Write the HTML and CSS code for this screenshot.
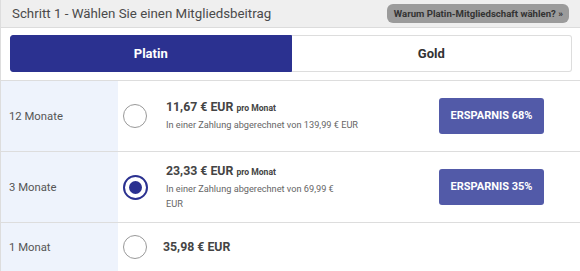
FILE: index.html
```html
<!DOCTYPE html>
<html>
  <head>
    <title>Mitgliedschaft</title>
    <meta name="viewport" content="width=device-width, initial-scale=1.0" />
    <link rel="stylesheet" href="styles.css">
  </head>
  <body>
    <div class="panel">
      <div class="panel-head">
        <span class="step">Schritt 1 - Wählen Sie einen Mitgliedsbeitrag</span>
        <a class="why" href="#">Warum Platin-Mitgliedschaft wählen? »</a>
      </div>

      <!-- Membership type -->
      <div class="tabs">
        <button class="tab active">Platin</button>
        <button class="tab">Gold</button>
      </div>

      <!-- Plans -->
      <div class="plans">
        <div class="plan">
          <div class="term">12 Monate</div>
          <div class="radio"></div>
          <div class="price">
            <div class="amount">11,67 € EUR <small>pro Monat</small></div>
            <div class="note">In einer Zahlung abgerechnet von 139,99 € EUR</div>
          </div>
          <div class="save"><span>ERSPARNIS 68%</span></div>
        </div>

        <div class="plan">
          <div class="term">3 Monate</div>
          <div class="radio checked"></div>
          <div class="price">
            <div class="amount">23,33 € EUR <small>pro Monat</small></div>
            <div class="note">In einer Zahlung abgerechnet von 69,99 €<br>EUR</div>
          </div>
          <div class="save"><span>ERSPARNIS 35%</span></div>
        </div>

        <div class="plan last">
          <div class="term">1 Monat</div>
          <div class="radio"></div>
          <div class="price">
            <div class="amount single">35,98 € EUR</div>
          </div>
          <div class="save"></div>
        </div>
      </div>
    </div>
  </body>
</html>
```

FILE: styles.css
```css
/* Base styles */
body {
  font-family: Roboto, "Liberation Sans", sans-serif;
  margin: 0;
  padding: 0;
  background: #fff;
  color: #444;
}

.panel {
  border-left: 1px solid #ddd;
}

.panel-head {
  height: 27px;
  background: #efefef;
  border-bottom: 1px solid #dcdcdc;
  display: flex;
  align-items: center;
  justify-content: space-between;
  padding: 0 11px 0 11px;
}

.step {
  font-size: 13.3px;
  color: #4a4a4a;
}

.why {
  background: #9b9b9b;
  color: #333;
  font-size: 9.6px;
  font-weight: bold;
  text-decoration: none;
  border-radius: 6px;
  padding: 4px 6px 4px 7px;
  margin-top: -1px;
}

/* Tabs */
.tabs {
  display: flex;
  margin: 7px 8px 8px 9px;
}

.tab {
  flex: 1;
  height: 37px;
  font-family: inherit;
  font-size: 13px;
  font-weight: bold;
  border: 1px solid #ddd;
  background: #fff;
  color: #333;
  cursor: pointer;
}

.tab.active {
  background: #2b3190;
  border-color: #2b3190;
  color: #fff;
  border-radius: 3px 0 0 3px;
}

.tab:last-child {
  border-left: none;
  border-radius: 0 3px 3px 0;
}

/* Plans */
.plans {
  border-top: 1px solid #ddd;
}

.plan {
  display: grid;
  grid-template-columns: 117px 43px 273px 1fr;
  align-items: center;
  height: 70px;
  border-bottom: 1px solid #ddd;
}

.plan.last {
  height: 48px;
  border-bottom: none;
}

.term {
  background: #eef3fc;
  height: 100%;
  display: flex;
  align-items: center;
  padding-left: 8px;
  font-size: 11.3px;
  color: #555;
}

.radio {
  width: 22px;
  height: 22px;
  border: 1.5px solid #999;
  border-radius: 50%;
  margin-left: 5px;
  position: relative;
}

.radio.checked {
  border: 2px solid #2b3190;
  width: 21px;
  height: 21px;
}

.radio.checked::after {
  content: "";
  position: absolute;
  left: 4px;
  top: 4px;
  width: 13px;
  height: 13px;
  border-radius: 50%;
  background: #2b3190;
}

.price {
  padding-left: 5px;
}

.amount {
  font-size: 12.3px;
  font-weight: bold;
  color: #444;
  line-height: 15px;
}

.amount small {
  font-size: 8.6px;
}

.amount.single {
  margin-left: -3px;
}

.note {
  font-size: 9.2px;
  color: #666;
  margin-top: 1px;
  line-height: 15px;
}

.save span {
  display: inline-block;
  width: 105px;
  height: 36px;
  line-height: 36px;
  text-align: center;
  background: #525aa8;
  color: #fff;
  font-size: 11px;
  font-weight: bold;
  border-radius: 3px;
  margin-left: 5px;
}
```
